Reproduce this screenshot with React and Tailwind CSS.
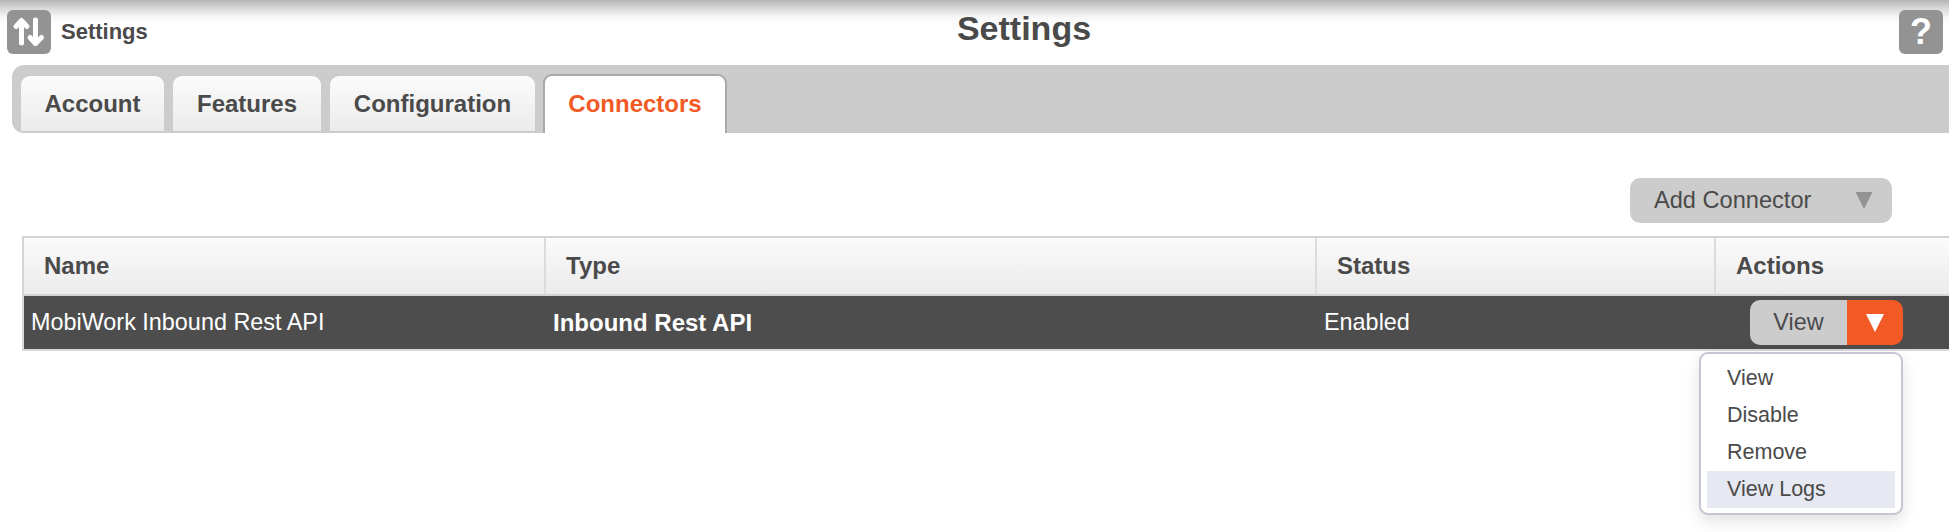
import React from "react";

const Tri = ({ cls }) => (
  <svg viewBox="0 0 18 18" className={cls}>
    <path d="M0 0H18L9 18Z" fill="currentColor" />
  </svg>
);

const Tab = ({ w, children }) => (
  <div className={`${w} h-[55px] mr-[9px] rounded-t-[9px] bg-gradient-to-b from-[#fbfbfb] to-[#ebebeb] flex items-center justify-center text-[24px] font-bold text-[#4a4a4a]`}>
    {children}
  </div>
);

const Th = ({ w, children }) => (
  <div className={`${w} h-full flex items-center pl-[20px] border-r-2 border-[#dcdcdc] text-[24px] font-bold text-[#4a4a4a] last:border-r-0`}>
    {children}
  </div>
);

export default function App() {
  return (
    <div className="w-[1949px] h-[532px] bg-white overflow-hidden text-[#4a4a4a]" style={{ fontFamily: '"Liberation Sans", Arial, sans-serif' }}>
      <header className="h-[65px] flex items-start bg-[linear-gradient(to_bottom,#b4b4b4_0px,#d8d8d8_8px,#f6f6f6_17px,#ffffff_24px)]">
        <div className="w-[149px] shrink-0 flex items-center pl-[7px] pt-[10px]">
          <div className="w-[44px] h-[44px] rounded-[6px] bg-[#939393] shrink-0">
            <svg viewBox="0 0 44 44" className="w-[44px] h-[44px]" fill="none" stroke="#fff" strokeWidth="5" strokeLinecap="round" strokeLinejoin="round">
              <path d="M14.500 33V10.500M9 16.500L14.500 10.500L20 16.500" />
              <path d="M28.500 10V33.500M23 27.500L28.500 33.500L34.500 27.500" />
            </svg>
          </div>
          <span className="ml-[10px] text-[22px] font-bold leading-none whitespace-nowrap">Settings</span>
        </div>
        <h1 className="flex-1 text-center text-[34px] font-bold leading-none pt-[11px]">Settings</h1>
        <div className="w-[50px] shrink-0 pt-[10px]">
          <div className="w-[44px] h-[44px] rounded-[6px] bg-[#939393] flex items-center justify-center text-white text-[36px] font-bold leading-none">?</div>
        </div>
      </header>

      <nav className="ml-[12px] h-[68px] bg-[#cccccc] rounded-tl-[12px] rounded-bl-[12px] flex items-end pl-[9px]">
        <div className="flex items-start h-[59px]">
          <div className="flex mt-[2px]">
            <Tab w="w-[143px]">Account</Tab>
            <Tab w="w-[148px]">Features</Tab>
            <Tab w="w-[205px]">Configuration</Tab>
          </div>
          <div className="w-[184px] h-[59px] -ml-[1px] pb-[2px] rounded-t-[9px] border-2 border-b-0 border-[#a9a9a9] bg-white flex items-center justify-center text-[24px] font-bold text-[#f15a24]">
            Connectors
          </div>
        </div>
      </nav>

      <div className="flex justify-end pr-[57px] pt-[45px]">
        <div className="w-[262px] h-[45px] rounded-[10px] bg-[#cccccc] flex items-center pl-[24px] pr-[19px] justify-between text-[23.600px]">
          <span>Add Connector</span>
          <Tri cls="w-[18px] h-[17px] text-[#939393]" />
        </div>
      </div>

      <div className="relative ml-[22px] mt-[13px]">
        <div className="h-[60px] flex items-center border-t-2 border-b-2 border-l-2 border-[#d4d4d4] bg-gradient-to-b from-[#fbfbfb] to-[#ebebeb]">
          <Th w="w-[522px]">Name</Th>
          <Th w="w-[771px]">Type</Th>
          <Th w="w-[399px]">Status</Th>
          <Th w="flex-1">Actions</Th>
        </div>
        <div className="h-[55px] flex items-center border-l-2 border-b-2 border-[#d9d9d9] bg-[#4d4d4d] text-white text-[23.400px]">
          <div className="w-[521px] pl-[7px]">MobiWork Inbound Rest API</div>
          <div className="w-[772px] pl-[8px] font-bold text-[24px]">Inbound Rest API</div>
          <div className="w-[399px] pl-[7px]">Enabled</div>
          <div className="flex pl-[34px]">
            <div className="w-[97px] h-[45px] rounded-l-[10px] bg-[#cccccc] text-[#4a4a4a] flex items-center justify-center">View</div>
            <div className="w-[56px] h-[45px] rounded-r-[10px] bg-[#f15a24] flex items-center justify-center">
              <Tri cls="w-[18px] h-[18px] text-white" />
            </div>
          </div>
        </div>

        <div className="absolute left-[1677px] top-[116px] w-[204px] h-[163px] rounded-[9px] border-2 border-[#c3c7d2] bg-white p-[6px] shadow-[0_6px_16px_rgba(0,0,0,0.12)] text-[21.500px]">
          {["View", "Disable", "Remove", "View Logs"].map((t, i) => (
            <div key={t} className={`h-[37px] pl-[20px] flex items-center ${i === 3 ? "bg-[#e6e9f1]" : ""}`}>{t}</div>
          ))}
        </div>
      </div>
    </div>
  );
}
